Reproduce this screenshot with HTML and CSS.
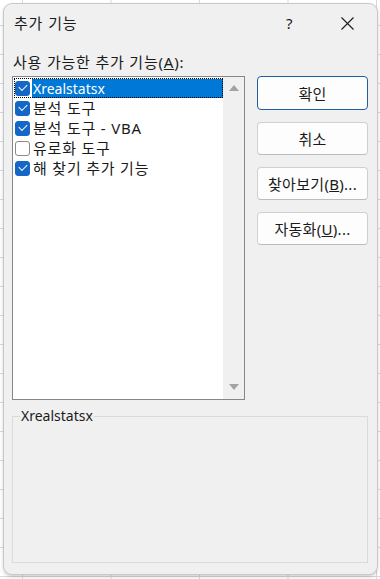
FILE: index.html
```html
<!DOCTYPE html>
<html lang="ko">
<head>
    <meta charset="UTF-8">
    <meta name="viewport" content="width=device-width, initial-scale=1.0">
    <title>추가 기능</title>
    <link rel="stylesheet" href="styles.css">
</head>
<body>

    <div class="dialog">
        <!-- 제목 표시줄 -->
        <div class="titlebar">
            <span class="title">추가 기능</span>
            <span class="help">?</span>
            <span class="close">
                <svg width="13" height="13" viewBox="0 0 13 13">
                    <path d="M0.5 0.5 L12.5 12.5 M12.5 0.5 L0.5 12.5" stroke="#1a1a1a" stroke-width="1.1" fill="none"/>
                </svg>
            </span>
        </div>

        <div class="content">
            <div class="list-label">사용 가능한 추가 기능(<u>A</u>):</div>

            <div class="main-row">
                <!-- 추가 기능 목록 -->
                <div class="listbox">
                    <div class="items">
                        <div class="item focused">
                            <span class="check on"></span>
                            <span class="item-text selected latin">Xrealstatsx</span>
                        </div>
                        <div class="item">
                            <span class="check on"></span>
                            <span class="item-text">분석 도구</span>
                        </div>
                        <div class="item">
                            <span class="check on"></span>
                            <span class="item-text">분석 도구 - VBA</span>
                        </div>
                        <div class="item">
                            <span class="check"></span>
                            <span class="item-text">유로화 도구</span>
                        </div>
                        <div class="item">
                            <span class="check on"></span>
                            <span class="item-text">해 찾기 추가 기능</span>
                        </div>
                    </div>
                    <div class="scrollbar">
                        <span class="arrow-up"></span>
                        <span class="arrow-down"></span>
                    </div>
                </div>

                <!-- 버튼 -->
                <div class="buttons">
                    <button class="btn btn-default">확인</button>
                    <button class="btn">취소</button>
                    <button class="btn">찾아보기(<u>B</u>)...</button>
                    <button class="btn">자동화(<u>U</u>)...</button>
                </div>
            </div>

            <fieldset class="description">
                <legend>Xrealstatsx</legend>
            </fieldset>
        </div>
    </div>

</body>
</html>
```

FILE: styles.css
```css
html, body {
    margin: 0;
    padding: 0;
}

body {
    width: 380px;
    height: 579px;
    overflow: hidden;
    font-family: "Noto Sans", "Noto Sans CJK KR", sans-serif;
    font-size: 15px;
    letter-spacing: 0.8px;
    color: #1a1a1a;
    background-color: #ffffff;
    background-image:
        linear-gradient(to right, #d9d9d9 1px, transparent 1px),
        linear-gradient(to bottom, #d9d9d9 1px, transparent 1px);
    background-size: 88.5px 29px;
    background-position: 22px 0, 0 25px;
}

.dialog {
    margin: 4px 0 0 4px;
    width: 373px;
    height: 570px;
    box-sizing: border-box;
    background-color: #f0f0f0;
    border-radius: 8px;
    box-shadow: 0 0 0 1px #c8c8c8, 0 2px 4px rgba(0, 0, 0, 0.25);
    display: flex;
    flex-direction: column;
}

.titlebar {
    height: 40px;
    display: flex;
    align-items: center;
    padding-left: 10px;
}

.title {
    flex: 1;
    font-family: "Noto Sans CJK KR", sans-serif;
    font-size: 15px;
    line-height: 20px;
    margin-top: -2px;
}

.help {
    font-size: 15px;
    letter-spacing: 0;
    width: 20px;
    margin-right: 35px;
    margin-top: -2px;
}

.close {
    display: flex;
    margin-right: 23px;
    margin-top: -2px;
}

.content {
    flex: 1;
    display: flex;
    flex-direction: column;
    padding: 0 9px 11px 8px;
}

.list-label {
    line-height: 20px;
    margin: 8px 0 4px 1px;
}

.main-row {
    display: flex;
    gap: 12px;
}

.listbox {
    width: 233px;
    height: 324px;
    box-sizing: border-box;
    border: 1px solid #828790;
    background-color: white;
    display: flex;
}

.items {
    flex: 1;
    padding-top: 1px;
}

.item {
    height: 20px;
    display: flex;
    align-items: center;
    padding-left: 2px;
    box-sizing: border-box;
}

.item.focused {
    outline: 1px dotted #000;
    outline-offset: -1px;
    margin-left: 1px;
    padding-left: 1px;
}

.check {
    width: 15px;
    height: 15px;
    box-sizing: border-box;
    border: 1px solid #8a8a8a;
    border-radius: 3px;
    background-color: white;
    margin-right: 2px;
    flex-shrink: 0;
    position: relative;
}

.check.on {
    background-color: #1467c6;
    border-color: #1467c6;
}

.check.on::after {
    content: "";
    position: absolute;
    left: 3px;
    top: 2px;
    width: 7px;
    height: 4px;
    border-left: 1.3px solid white;
    border-bottom: 1.3px solid white;
    transform: rotate(-45deg);
}

.item-text {
    height: 19px;
    line-height: 19px;
    padding-left: 1px;
    flex: 1;
    white-space: nowrap;
}

.latin {
    font-size: 14px;
    letter-spacing: 0;
}

.item-text.selected {
    background-color: #0078d7;
    color: white;
}

.scrollbar {
    width: 21px;
    background-color: #f0f0f0;
    display: flex;
    flex-direction: column;
    justify-content: space-between;
    align-items: center;
    padding: 8px 0 9px;
}

.arrow-up, .arrow-down {
    width: 0;
    height: 0;
    border-left: 5px solid transparent;
    border-right: 5px solid transparent;
}

.arrow-up {
    border-bottom: 6px solid #a3a3a3;
}

.arrow-down {
    border-top: 6px solid #a3a3a3;
}

.buttons {
    display: flex;
    flex-direction: column;
    gap: 12px;
}

.btn {
    width: 111px;
    height: 33px;
    box-sizing: border-box;
    background-color: #fdfdfd;
    border: 1px solid #d0d0d0;
    border-bottom-color: #bcbcbc;
    border-radius: 4px;
    font-family: "Noto Sans", "Noto Sans CJK KR", sans-serif;
    font-size: 15px;
    letter-spacing: 0.3px;
    color: #1a1a1a;
    padding: 0;
}

.btn-default {
    border: 1px solid #1f5f9e;
    height: 34px;
}

.description {
    margin: 6px 0 0 0;
    padding: 0;
    flex: 1;
    border: 1px solid #dadada;
    min-width: 0;
}

.description legend {
    margin-left: 7px;
    padding: 0 1px;
    font-size: 14px;
    letter-spacing: 0;
    line-height: 20px;
}
```
